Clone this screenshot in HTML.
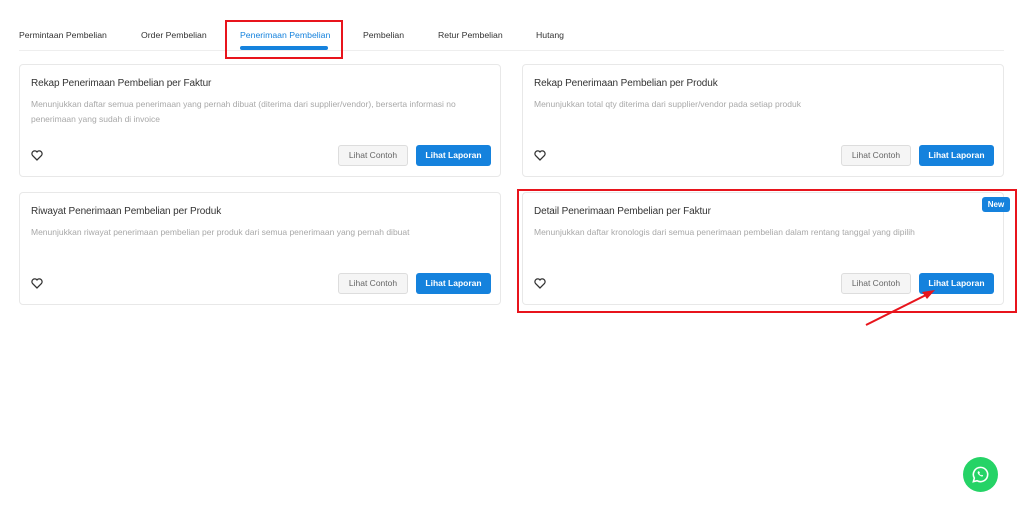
<!DOCTYPE html>
<html><head><style>
*{margin:0;padding:0;box-sizing:border-box}
body{width:1024px;height:520px;background:#fff;font-family:"Liberation Sans",sans-serif;position:relative;overflow:hidden}
.tab{position:absolute;top:30px;font-size:8.7px;color:#333}
.card{position:absolute;width:482px;height:113px;border:1px solid #e8e8e8;border-radius:4px;background:#fff}
.t{position:absolute;left:11px;top:13px;font-size:10px;color:#333;letter-spacing:-0.1px}
.d{position:absolute;left:11px;top:32px;font-size:8.5px;color:#a8a8a8;line-height:15px;width:460px}
.b1{position:absolute;left:318px;top:80px;width:70px;height:21px;border:1px solid #ddd;background:#f5f5f5;border-radius:3px;font-size:8.5px;color:#666;text-align:center;line-height:19px}
.b2{position:absolute;left:396px;top:80px;width:75px;height:21px;background:#1582dd;border-radius:3px;font-size:8.5px;color:#fff;text-align:center;line-height:21px;font-weight:bold}
.h{position:absolute;left:11px;top:85px}
</style></head><body>
<div class="tab" style="left:19px">Permintaan Pembelian</div>
<div class="tab" style="left:141px">Order Pembelian</div>
<div class="tab" style="left:240px;color:#1582dd">Penerimaan Pembelian</div>
<div class="tab" style="left:363px">Pembelian</div>
<div class="tab" style="left:438px">Retur Pembelian</div>
<div class="tab" style="left:536px">Hutang</div>
<div style="position:absolute;left:19px;top:50px;width:985px;height:1px;background:#eee"></div>
<div style="position:absolute;left:240px;top:46px;width:88px;height:4px;border-radius:2px;background:#1582dd"></div>
<div style="position:absolute;left:225px;top:20px;width:118px;height:39px;border:2px solid #e8141c"></div>

<div class="card" style="left:19px;top:64px"><div class="t">Rekap Penerimaan Pembelian per Faktur</div><div class="d">Menunjukkan daftar semua penerimaan yang pernah dibuat (diterima dari supplier/vendor), berserta informasi no penerimaan yang sudah di invoice</div>
<svg class="h" width="12" height="11" viewBox="0 0 24 22"><path d="M12 20 3 11a5 5 0 0 1 9-7 5 5 0 0 1 9 7z" fill="none" stroke="#333" stroke-width="2.5"/></svg><div class="b1">Lihat Contoh</div><div class="b2">Lihat Laporan</div></div>
<div class="card" style="left:522px;top:64px"><div class="t">Rekap Penerimaan Pembelian per Produk</div><div class="d">Menunjukkan total qty diterima dari supplier/vendor pada setiap produk</div>
<svg class="h" width="12" height="11" viewBox="0 0 24 22"><path d="M12 20 3 11a5 5 0 0 1 9-7 5 5 0 0 1 9 7z" fill="none" stroke="#333" stroke-width="2.5"/></svg><div class="b1">Lihat Contoh</div><div class="b2">Lihat Laporan</div></div>
<div class="card" style="left:19px;top:192px"><div class="t">Riwayat Penerimaan Pembelian per Produk</div><div class="d">Menunjukkan riwayat penerimaan pembelian per produk dari semua penerimaan yang pernah dibuat</div>
<svg class="h" width="12" height="11" viewBox="0 0 24 22"><path d="M12 20 3 11a5 5 0 0 1 9-7 5 5 0 0 1 9 7z" fill="none" stroke="#333" stroke-width="2.5"/></svg><div class="b1">Lihat Contoh</div><div class="b2">Lihat Laporan</div></div>
<div class="card" style="left:522px;top:192px"><div class="t">Detail Penerimaan Pembelian per Faktur</div><div class="d">Menunjukkan daftar kronologis dari semua penerimaan pembelian dalam rentang tanggal yang dipilih</div>
<svg class="h" width="12" height="11" viewBox="0 0 24 22"><path d="M12 20 3 11a5 5 0 0 1 9-7 5 5 0 0 1 9 7z" fill="none" stroke="#333" stroke-width="2.5"/></svg><div class="b1">Lihat Contoh</div><div class="b2">Lihat Laporan</div></div>
<div style="position:absolute;left:982px;top:197px;width:28px;height:15px;background:#1582dd;border-radius:3px;color:#fff;font-size:8px;font-weight:bold;text-align:center;line-height:15px">New</div>
<div style="position:absolute;left:517px;top:189px;width:500px;height:124px;border:2px solid #e8141c"></div>
<svg style="position:absolute;left:0;top:0" width="1024" height="520"><line x1="866" y1="325" x2="928" y2="294" stroke="#e8141c" stroke-width="2"/><path d="M935 290 922 292 927 299z" fill="#e8141c"/></svg>
<div style="position:absolute;left:963px;top:457px;width:35px;height:35px;border-radius:50%;background:#25d366"></div>
<svg style="position:absolute;left:971px;top:465px" width="19" height="19" viewBox="0 0 24 24"><path d="M12 3a9 9 0 0 0-7.8 13.5L3 21l4.6-1.2A9 9 0 1 0 12 3z" fill="none" stroke="#fff" stroke-width="2"/><path d="M9 8c-1 1-.8 2.5.5 4s3 2.5 4.5 2.5c1 0 1.5-1 1.2-1.4l-1.5-.8-.8.8c-1-.4-2-1.4-2.4-2.4l.8-.8-.8-1.6c-.4-.4-1-.6-1.5-.3z" fill="#fff"/></svg>
</body></html>
